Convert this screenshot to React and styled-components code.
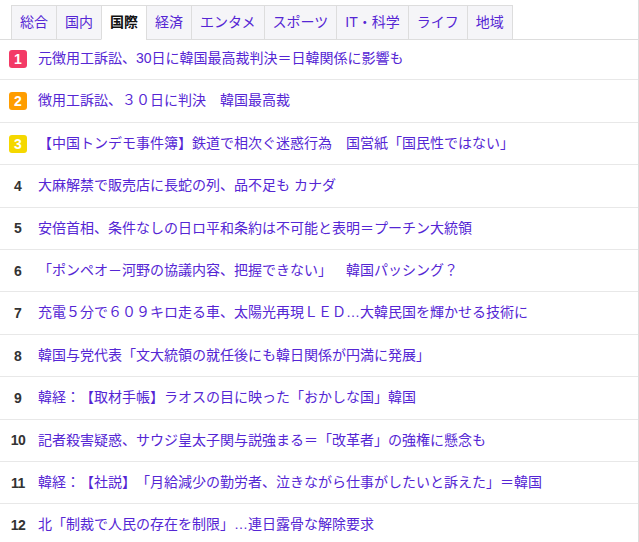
import React from "react";
import styled, { createGlobalStyle } from "styled-components";

const GlobalStyle = createGlobalStyle`
	body {
		margin: 0;
		background: #fff;
		font-family: "Liberation Sans", "Noto Sans CJK JP", sans-serif;
		text-spacing-trim: space-all;
	}
`;

const Page = styled.div`
	width: 638px;
	border-right: 1px solid #ddd;
	min-height: 542px;
`;

const TabBar = styled.ul`
	display: flex;
	margin: 0;
	padding: 5px 0 0 11px;
	list-style: none;
	border-bottom: 1px solid #ddd;
`;

const Tab = styled.li`
	height: 33px;
	line-height: 33px;
	padding: 0 8px;
	font-size: 14px;
	border: 1px solid #ddd;
	border-right: none;
	border-bottom: 1px solid ${(p) => (p.$active ? "#fff" : "#ddd")};
	margin-bottom: -1px;
	background: ${(p) => (p.$active ? "#fff" : "#f5f5f8")};
	color: ${(p) => (p.$active ? "#111" : "#5526d4")};
	font-weight: ${(p) => (p.$active ? "bold" : "normal")};
	&:last-child {
		border-right: 1px solid #ddd;
	}
`;

const List = styled.ol`
	margin: -2px 0 0;
	padding: 0;
	list-style: none;
`;

const Row = styled.li`
	display: flex;
	align-items: center;
	gap: 11px;
	padding: 10px 0 10px 9px;
	line-height: 21.4px;
	border-bottom: 1px solid #e8e8e8;
	text-spacing-trim: space-all;
	&:last-child {
		border-bottom: none;
	}
`;

const rankColors = { 1: "#f33a66", 2: "#ff9d00", 3: "#f5d800" };

const Rank = styled.span`
	flex: 0 0 18px;
	height: 18px;
	line-height: 18px;
	border-radius: 3px;
	text-align: center;
	font-size: 14px;
	font-weight: bold;
	background: ${(p) => rankColors[p.$n] || "transparent"};
	color: ${(p) => (rankColors[p.$n] ? "#fff" : "#333")};
	letter-spacing: ${(p) => (p.$n >= 10 ? "-0.5px" : "0")};
`;

const Title = styled.a`
	font-size: 14px;
	color: #5526d4;
	text-decoration: none;
	white-space: nowrap;
	text-spacing-trim: space-all;
`;

const tabs = ["総合", "国内", "国際", "経済", "エンタメ", "スポーツ", "IT・科学", "ライフ", "地域"];

const items = [
	"元徴用工訴訟、30日に韓国最高裁判決＝日韓関係に影響も",
	"徴用工訴訟、３０日に判決　韓国最高裁",
	"【中国トンデモ事件簿】鉄道で相次ぐ迷惑行為　国営紙「国民性ではない」",
	"大麻解禁で販売店に長蛇の列、品不足も カナダ",
	"安倍首相、条件なしの日ロ平和条約は不可能と表明＝プーチン大統領",
	"「ポンペオ－河野の協議内容、把握できない」　韓国パッシング？",
	"充電５分で６０９キロ走る車、太陽光再現ＬＥＤ…大韓民国を輝かせる技術に",
	"韓国与党代表「文大統領の就任後にも韓日関係が円満に発展」",
	"韓経：【取材手帳】ラオスの目に映った「おかしな国」韓国",
	"記者殺害疑惑、サウジ皇太子関与説強まる＝「改革者」の強権に懸念も",
	"韓経：【社説】「月給減少の勤労者、泣きながら仕事がしたいと訴えた」＝韓国",
	"北「制裁で人民の存在を制限」…連日露骨な解除要求",
];

export default function App() {
	return (
		<Page>
			<GlobalStyle />
			<TabBar>
				{tabs.map((t) => (
					<Tab key={t} $active={t === "国際"}>
						{t}
					</Tab>
				))}
			</TabBar>
			<List>
				{items.map((text, i) => (
					<Row key={i}>
						<Rank $n={i + 1}>{i + 1}</Rank>
						<Title href="#">{text}</Title>
					</Row>
				))}
			</List>
		</Page>
	);
}
